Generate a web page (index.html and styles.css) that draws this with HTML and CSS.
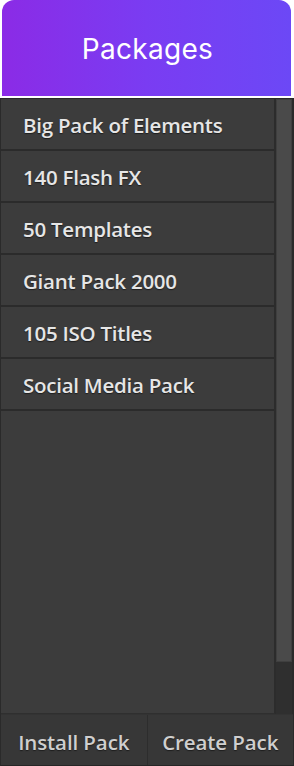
FILE: index.html
```html
<!DOCTYPE html>
<html>
<head>
<meta charset="utf-8">
<link rel="stylesheet" href="styles.css">
</head>
<body>
<div class="app">
  <header class="header">Packages</header>
  <section class="panel">
    <div class="body">
      <ul class="list">
        <li class="item">Big Pack of Elements</li>
        <li class="item">140 Flash FX</li>
        <li class="item">50 Templates</li>
        <li class="item">Giant Pack 2000</li>
        <li class="item">105 ISO Titles</li>
        <li class="item">Social Media Pack</li>
      </ul>
      <div class="scrollbar"><div class="thumb"></div></div>
    </div>
    <footer class="footer">
      <button class="btn">Install Pack</button>
      <button class="btn">Create Pack</button>
    </footer>
  </section>
</div>
</body>
</html>
```
FILE: styles.css
```css
* { box-sizing: border-box; margin: 0; padding: 0; }
html, body { background: #ffffff; }
body { width: 294px; height: 766px; overflow: hidden; }
.app { display: flex; flex-direction: column; height: 766px; }
.header {
  margin: 0 3px 0 2px;
  height: 96px;
  border-radius: 12px 12px 0 0;
  background: linear-gradient(90deg, #8b2be6 0%, #7a3cf2 50%, #6c48f6 100%);
  color: #ffffff;
  font-family: Inter, "Noto Sans", sans-serif;
  font-weight: 400;
  font-size: 28px;
  letter-spacing: 0.3px;
  display: flex;
  align-items: center;
  justify-content: center;
  padding-top: 2px;
  padding-left: 2px;
}
.panel {
  margin-top: 2px;
  flex: 1;
  display: flex;
  flex-direction: column;
  background: #3b3b3b;
  border: 1px solid #2a2a2a;
  border-bottom: 1px solid #262626;
}
.body { flex: 1; display: flex; min-height: 0; }
.list {
  list-style: none;
  flex: 1;
  background: #3c3c3c;
  border-right: 2px solid #2c2c2c;
  border-bottom: 1px solid #2f2f2f;
}
.item {
  height: 52px;
  border-bottom: 2px solid #2b2b2b;
  display: flex;
  align-items: center;
  padding-left: 22px;
  padding-top: 2px;
  font-family: "Open Sans", "Noto Sans", sans-serif;
  font-weight: 600;
  font-size: 20.5px;
  letter-spacing: -0.25px;
  color: #e6e6e6;
  text-shadow: 0 1px 1px #1e1e1e;
}
.scrollbar {
  width: 17px;
  background: #2f2f2f;
  border-right: 1px solid #2a2a2a;
  display: flex;
  flex-direction: column;
}
.thumb {
  height: 563px;
  background: #4a4a4a;
  border: 1px solid #3f3f3f;
}
.footer {
  height: 51px;
  display: flex;
  background: #373737;
  border-top: 1px solid #333333;
}
.btn {
  flex: 1;
  background: transparent;
  border: none;
  font-family: "Open Sans", "Noto Sans", sans-serif;
  font-weight: 600;
  font-size: 20.5px;
  letter-spacing: -0.1px;
  color: #cfcfcf;
  text-shadow: 0 1px 1px #1e1e1e;
  padding-top: 4px;
}
.btn + .btn { border-left: 1px solid #2d2d2d; }
```
